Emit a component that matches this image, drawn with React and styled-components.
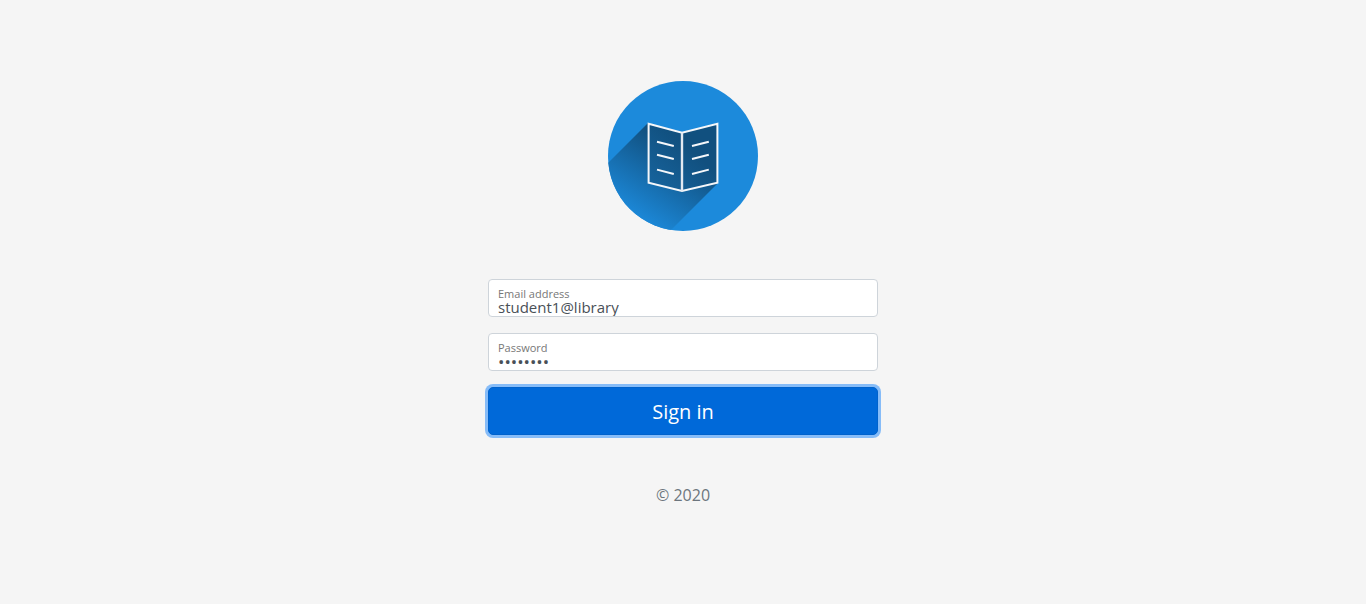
import React, { useState } from "react";
import styled, { createGlobalStyle } from "styled-components";

const GlobalStyle = createGlobalStyle`
  *, *::before, *::after {
    box-sizing: border-box;
  }
  body {
    margin: 0;
    background: #f5f5f5;
    color: #212529;
    font-family: "Segoe UI", "Open Sans", "Noto Sans", sans-serif;
    font-size: 16px;
    line-height: 24px;
  }
`;

const Page = styled.main`
  display: flex;
  align-items: center;
  justify-content: center;
  min-height: 100vh;
`;

const SignInForm = styled.form`
  display: flex;
  flex-direction: column;
  gap: 16px;
  width: 100%;
  max-width: 420px;
  padding: 15px;
`;

const Logo = styled.svg`
  display: block;
  width: 150px;
  height: 150px;
  margin: 0 auto 32px;
`;

const Field = styled.div`
  position: relative;
`;

const FieldLabel = styled.label`
  position: absolute;
  top: 6px;
  left: 10px;
  color: #777;
  font-size: 11px;
  line-height: 18px;
  pointer-events: none;
`;

const FieldInput = styled.input`
  display: block;
  width: 100%;
  height: 38px;
  padding: 18px 9px 0;
  border: 1px solid #ced4da;
  border-radius: 4px;
  background: #fff;
  color: #495057;
  font-family: inherit;
  font-size: ${({ type }) => (type === "password" ? "17px" : "15px")};
  line-height: 18px;
  outline: none;
`;

const SubmitButton = styled.button`
  height: 48px;
  padding: 2px 16px 0;
  border: 1px solid #0062cc;
  border-radius: 5px;
  background: #0069d9;
  box-shadow: 0 0 0 3px #86bcf8;
  color: #fff;
  font-family: inherit;
  font-size: 20px;
  line-height: 30px;
  cursor: pointer;
  outline: none;
`;

const Copyright = styled.p`
  margin: 32px 0 16px;
  color: #6c757d;
  text-align: center;
`;

function BookLogo() {
  return (
    <Logo viewBox="0 0 150 150" role="img" aria-label="Library">
      <defs>
        <clipPath id="disc">
          <circle cx="75" cy="75" r="75" />
        </clipPath>
        <linearGradient id="shade" gradientUnits="userSpaceOnUse" x1="72" y1="69" x2="27" y2="138">
          <stop offset="0" stopColor="#11507f" />
          <stop offset="1" stopColor="#1c8adb" />
        </linearGradient>
        <linearGradient id="page" gradientUnits="userSpaceOnUse" x1="80" y1="66" x2="42" y2="108">
          <stop offset="0" stopColor="#11507f" />
          <stop offset="1" stopColor="#17659f" />
        </linearGradient>
      </defs>
      <circle cx="75" cy="75" r="75" fill="#1c8adb" />
      <g clipPath="url(#disc)">
        <path d="M40 42 L-20 102 L40 172 L110 102 L110 42 L75 52 Z" fill="url(#shade)" />
      </g>
      <path d="M40.6 42.8 L74 51.8 L109.4 42.8 V101.8 L74 110 L40.6 101.8 Z" fill="url(#page)" stroke="#f5f7fa" strokeWidth="2" />
      <path d="M74 51.8 V110" stroke="#e3e9f1" strokeWidth="2.4" />
      <path
        d="M49 60.8 L65.8 65 M49 73.8 L65.8 78 M49 88.6 L65.8 93 M84 65 L100.8 60.8 M84 78 L100.8 73.8 M84 93 L100.8 88.6"
        stroke="#f5f7fa"
        strokeWidth="2"
      />
    </Logo>
  );
}

export default function App() {
  const [email, setEmail] = useState("student1@library");
  const [password, setPassword] = useState("password");

  return (
    <>
      <GlobalStyle />
      <Page>
        <SignInForm onSubmit={(event) => event.preventDefault()}>
          <BookLogo />
          <Field>
            <FieldInput id="email" type="text" value={email} onChange={(event) => setEmail(event.target.value)} />
            <FieldLabel htmlFor="email">Email address</FieldLabel>
          </Field>
          <Field>
            <FieldInput id="password" type="password" value={password} onChange={(event) => setPassword(event.target.value)} />
            <FieldLabel htmlFor="password">Password</FieldLabel>
          </Field>
          <SubmitButton type="submit">Sign in</SubmitButton>
          <Copyright>© 2020</Copyright>
        </SignInForm>
      </Page>
    </>
  );
}
